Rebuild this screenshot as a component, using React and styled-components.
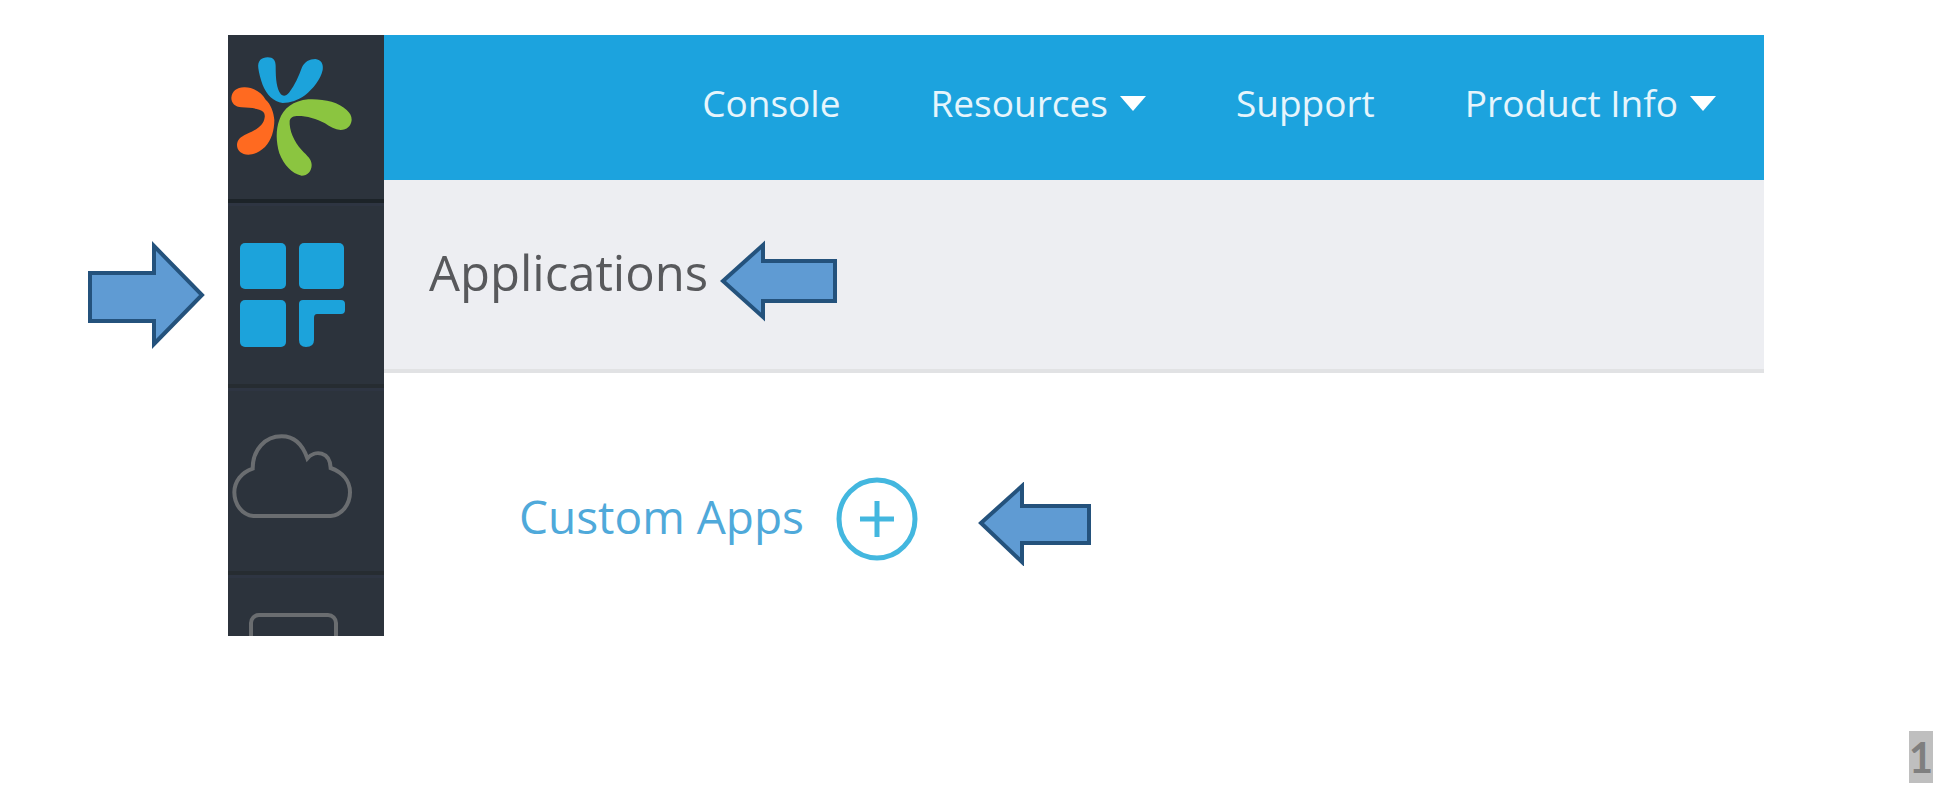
import React from "react";
import styled, { createGlobalStyle } from "styled-components";

const GlobalStyle = createGlobalStyle`
  *, *::before, *::after { box-sizing: border-box; }
  body {
    margin: 0;
    background: #fff;
    font-family: "Open Sans", "Noto Sans", sans-serif;
  }
`;

const Slide = styled.div`
  display: flex;
  flex-direction: column;
  padding-top: 35px;
`;

const Figure = styled.div`
  display: flex;
  padding-right: 196px;
`;

const Gutter = styled.div`
  flex: 0 0 228px;
  padding: 205px 0 0 87px;
`;

const Sidebar = styled.nav`
  flex: 0 0 156px;
  background: #2c333c;
`;

const SideLink = styled.a`
  display: block;
  overflow: hidden;
  height: ${(p) => p.$height}px;
  padding: ${(p) => p.$pad};
  border-top: ${(p) => (p.$first ? "0" : "3px solid #2e3542")};
  border-bottom: ${(p) => (p.$last ? "0" : "4px solid " + (p.$first ? "#1c2328" : "#262c31"))};

  svg { display: block; }
`;

const Main = styled.main`
  flex: 1;
  min-width: 0;
`;

const Header = styled.header`
  height: 145px;
  padding: 44px 48px 0 0;
  background: #1ca3de;
`;

const Menu = styled.nav`
  display: flex;
  justify-content: flex-end;
  gap: 90px;
`;

const menuText = `
  color: #e6f5fc;
  font-family: inherit;
  font-size: 37px;
  font-weight: 500;
  line-height: 48px;
  white-space: nowrap;
`;

const MenuLink = styled.a`
  ${menuText}
  text-decoration: none;
`;

const MenuButton = styled.button`
  ${menuText}
  display: flex;
  align-items: center;
  gap: 12px;
  padding: 0;
  border: 0;
  background: none;
`;

const Caret = styled.span`
  border: 13px solid transparent;
  border-top: 15px solid #fff;
  border-bottom: 0;
`;

const TitleBar = styled.div`
  display: flex;
  align-items: flex-start;
  gap: 12px;
  height: 193px;
  padding: 60px 0 0 45px;
  background: #edeef2;
  border-bottom: 4px solid #e1e2e4;
`;

const Title = styled.h1`
  margin: 0;
  color: #58595c;
  font-size: 49px;
  font-weight: 400;
  line-height: 64px;
`;

const AppsRow = styled.section`
  display: flex;
  align-items: flex-start;
  gap: 60px;
  height: 90px;
  margin: 103px 0 0 135px;
`;

const AppsGroup = styled.div`
  display: flex;
  align-items: flex-start;
  gap: 32px;
`;

const AppsTitle = styled.h2`
  margin: 0;
  color: #4fa9da;
  font-size: 46px;
  font-weight: 400;
  line-height: 80px;
`;

const AddButton = styled.button`
  padding: 0;
  border: 0;
  background: none;

  svg { display: block; }
`;

const Arrow = styled.svg`
  display: block;
  flex: none;
  align-self: ${(p) => p.$align || "auto"};
  fill: #5f9bd3;
  stroke: #24527c;
  stroke-width: 4;
`;

const Footer = styled.footer`
  display: flex;
  justify-content: flex-end;
  padding: 95px 27px 24px 0;
`;

const PageNumber = styled.span`
  background: #bfbfbf;
  color: #7f7f7f;
  font-family: Lato, sans-serif;
  font-size: 42px;
  font-weight: 700;
  line-height: 52px;
`;

function Logo() {
  return (
    <svg width="156" height="164" viewBox="24 15 468 492" aria-hidden="true">
      <path fill="#1ca3db" d="M115 115C112 92 125 82 143 82C160 82 167 92 167 108C167 150 170 175 182 192C190 200 198 198 207 188C225 165 236 140 246 112C254 95 268 87 286 87C304 89 311 103 308 120C301 150 280 175 255 196C235 211 210 219 188 219C160 215 140 195 128 165C121 145 117 130 115 115Z" />
      <path fill="#ff6a20" d="M34 203C36 183 50 173 72 172C100 171 125 187 137 209C152 222 161 245 163 270C163 300 155 330 135 351C118 367 100 374 85 374C65 374 51 362 51 345C51 330 62 320 80 312C110 300 132 285 134 262C136 250 130 243 118 239C100 233 85 234 65 232C45 230 34 220 34 203Z" />
      <path fill="#8bc540" d="M178 270C190 235 220 212 265 208C310 206 355 216 380 240C391 250 395 258 395 270C393 289 380 300 362 300C345 299 330 290 315 280C290 266 260 258 235 258C220 258 212 262 209 272C207 300 222 335 245 360C262 378 275 388 275 405C275 424 262 437 245 437C215 431 192 405 178 370C168 335 167 300 178 270Z" />
    </svg>
  );
}

function AppsIcon() {
  return (
    <svg width="107" height="107" viewBox="0 0 107 107" fill="#1ca3db" aria-hidden="true">
      <rect x="1" y="1" width="46" height="46" rx="5" />
      <rect x="60" y="1" width="45" height="46" rx="5" />
      <rect x="1" y="58" width="46" height="47" rx="5" />
      <path d="M64 58H102Q106 58 106 62V68Q106 72 102 72H78Q75 72 75 76V98Q75 105 67 105Q60 105 60 98V62Q60 58 64 58Z" />
    </svg>
  );
}

function CloudIcon() {
  return (
    <svg width="121" height="88" viewBox="36 187 363 264" fill="none" stroke="#6a6d70" strokeWidth="12" aria-hidden="true">
      <path d="M100 439C66 436 43 404 43 368C43 335 65 308 98 297C98 240 135 200 185 200C222 200 248 225 262 266C285 240 330 245 332 295C365 307 390 332 390 368C390 405 365 436 332 439Z" />
    </svg>
  );
}

function DeviceIcon() {
  return (
    <svg width="91" height="60" viewBox="0 0 91 60" fill="none" stroke="#6a6d70" strokeWidth="4" aria-hidden="true">
      <rect x="3" y="3" width="85" height="80" rx="8" />
    </svg>
  );
}

export default function App() {
  return (
    <>
      <GlobalStyle />
      <Slide>
        <Figure>
          <Gutter>
            <Arrow width="118" height="110" viewBox="0 0 118 110" aria-hidden="true">
              <path d="M3 33H67V6L115 55L67 104V81H3Z" />
            </Arrow>
          </Gutter>
          <Sidebar aria-label="Sections">
            <SideLink href="#home" aria-label="Home" $first $height={168} $pad="0">
              <Logo />
            </SideLink>
            <SideLink href="#applications" aria-label="Applications" $height={185} $pad="36px 0 0 11px">
              <AppsIcon />
            </SideLink>
            <SideLink href="#cloud" aria-label="Cloud" $height={187} $pad="41px 0 0 4px">
              <CloudIcon />
            </SideLink>
            <SideLink href="#devices" aria-label="Devices" $last $height={61} $pad="34px 0 0 20px">
              <DeviceIcon />
            </SideLink>
          </Sidebar>
          <Main>
            <Header>
              <Menu aria-label="Main">
                <MenuLink href="#console">Console</MenuLink>
                <MenuButton type="button">Resources<Caret /></MenuButton>
                <MenuLink href="#support">Support</MenuLink>
                <MenuButton type="button">Product Info<Caret /></MenuButton>
              </Menu>
            </Header>
            <TitleBar>
              <Title>Applications</Title>
              <Arrow width="118" height="82" viewBox="0 0 118 82" aria-hidden="true">
                <path d="M3 41L43 5V21H115V61H43V77Z" />
              </Arrow>
            </TitleBar>
            <AppsRow>
              <AppsGroup>
                <AppsTitle>Custom Apps</AppsTitle>
                <AddButton type="button" aria-label="Add custom app">
                  <svg width="82" height="86" viewBox="0 0 82 86" fill="none" stroke="#43b7df" strokeWidth="5">
                    <ellipse cx="41" cy="43" rx="38" ry="39" />
                    <path d="M24 43H58M41 25V61" />
                  </svg>
                </AddButton>
              </AppsGroup>
              <Arrow $align="flex-end" width="114" height="84" viewBox="0 0 114 84" aria-hidden="true">
                <path d="M3 41L44 4V24H111V61H44V80Z" />
              </Arrow>
            </AppsRow>
          </Main>
        </Figure>
        <Footer>
          <PageNumber>1</PageNumber>
        </Footer>
      </Slide>
    </>
  );
}
